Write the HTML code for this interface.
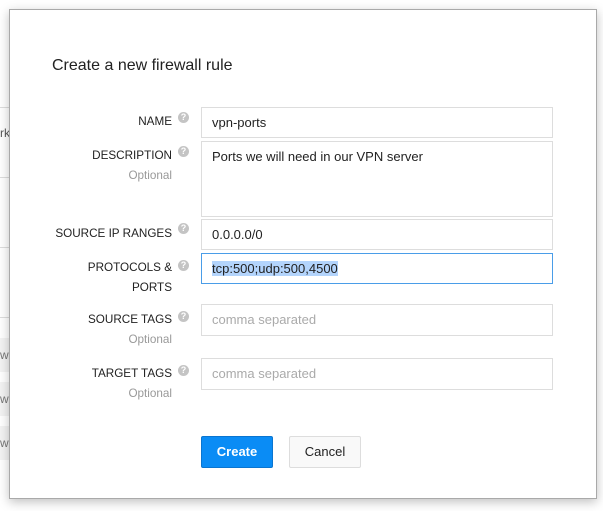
<!DOCTYPE html>
<html><head><style>
body{margin:0;width:603px;height:511px;background:#fff;position:relative;overflow:hidden;font-family:"Liberation Sans",sans-serif}
.bgl{position:absolute;left:0;width:10px;height:1px;background:#ddd}
.bgr{position:absolute;left:0;width:10px;background:#f3f3f3}
.dlg{position:absolute;left:9px;top:9px;width:586px;height:488px;background:#fff;border:1px solid #a9a9a9;box-shadow:0 3px 10px rgba(0,0,0,.25)}
h1{position:absolute;left:42px;top:47px;margin:0;font-size:16px;font-weight:normal;color:#222}
.lbl{position:absolute;right:424px;text-align:right;font-size:11.7px;color:#222;line-height:20px}
.opt{color:#999}
.q{position:absolute;left:168px;width:11px;height:11px;border-radius:50%;background:#c4c4c4;color:#fff;font-size:9px;font-weight:bold;text-align:center;line-height:11px}
.in{position:absolute;left:191px;border:1px solid #ddd;font-size:13px;color:#222;padding-left:10px;box-sizing:border-box;width:352px}
.ph{color:#aaa}
.btn{position:absolute;top:426px;height:32px;box-sizing:border-box;font-size:13px;text-align:center;line-height:30px;border-radius:2px}
</style></head><body>
<div class="bgl" style="top:107px"></div>
<div class="bgl" style="top:177px"></div>
<div class="bgl" style="top:247px"></div>
<div class="bgl" style="top:317px"></div>
<div style="position:absolute;left:0;top:126px;font-size:12px;color:#555">rk</div>
<div class="bgr" style="top:338px;height:34px"></div>
<div class="bgr" style="top:382px;height:34px"></div>
<div class="bgr" style="top:426px;height:34px"></div>
<div style="position:absolute;left:0;top:348px;font-size:12px;color:#777">w</div>
<div style="position:absolute;left:0;top:392px;font-size:12px;color:#777">w</div>
<div style="position:absolute;left:0;top:436px;font-size:12px;color:#777">w</div>
<div class="dlg">
<h1>Create a new firewall rule</h1>
<div class="lbl" style="top:102px">NAME</div><div class="q" style="top:102px">?</div>
<div class="in" style="top:97px;height:31px;line-height:29px">vpn-ports</div>
<div class="lbl" style="top:136px">DESCRIPTION<br><span class="opt">Optional</span></div><div class="q" style="top:136px">?</div>
<div class="in" style="top:131px;height:76px;line-height:29px">Ports we will need in our VPN server</div>
<div class="lbl" style="top:214px">SOURCE IP RANGES</div><div class="q" style="top:213px">?</div>
<div class="in" style="top:209px;height:31px;line-height:29px">0.0.0.0/0</div>
<div class="lbl" style="top:248px;line-height:20px">PROTOCOLS &amp;<br>PORTS</div><div class="q" style="top:250px">?</div>
<div class="in" style="top:243px;height:31px;line-height:29px;border-color:#4a9de8"><span style="background:#b3d4fc">tcp:500;udp:500,4500</span></div>
<div class="lbl" style="top:300px">SOURCE TAGS<br><span class="opt">Optional</span></div><div class="q" style="top:301px">?</div>
<div class="in ph" style="top:294px;height:32px;line-height:30px">comma separated</div>
<div class="lbl" style="top:354px">TARGET TAGS<br><span class="opt">Optional</span></div><div class="q" style="top:355px">?</div>
<div class="in ph" style="top:348px;height:32px;line-height:30px">comma separated</div>
<div class="btn" style="left:191px;width:72px;background:#0a8cf5;border:1px solid #0a75d0;color:#fff;font-weight:bold">Create</div>
<div class="btn" style="left:279px;width:72px;background:#f9f9f9;border:1px solid #ddd;color:#222">Cancel</div>
</div>
</body></html>
